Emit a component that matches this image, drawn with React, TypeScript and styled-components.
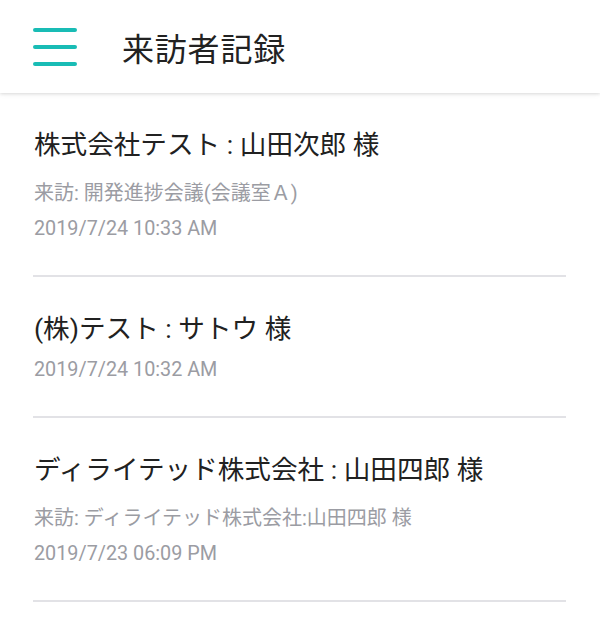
import { createGlobalStyle, styled } from "styled-components";

const GlobalStyle = createGlobalStyle`
  html, body {
    margin: 0;
    padding: 0;
    background: #fff;
  }
  body {
    font-family: Roboto, "Noto Sans CJK JP", sans-serif;
    color: #212121;
  }
`;

const Header = styled.header`
  height: 93px;
  display: flex;
  align-items: center;
  padding-left: 33px;
  background: #fff;
  box-shadow: 0 1px 3px rgba(0, 0, 0, 0.12), 0 2px 6px rgba(0, 0, 0, 0.04);
  position: relative;
  z-index: 1;
`;

const MenuButton = styled.button`
  width: 44px;
  height: 38px;
  padding: 0;
  border: none;
  background: transparent;
  display: flex;
  flex-direction: column;
  justify-content: space-between;
  margin-right: 45px;
  margin-top: 1px;

  & span {
    display: block;
    height: 4px;
    border-radius: 2px;
    background: #19bcb5;
  }
`;

const Title = styled.h1`
  margin: 0;
  font-size: 32px;
  font-weight: 400;
  color: #222;
  letter-spacing: 0.8px;
`;

const List = styled.ul`
  list-style: none;
  margin: 0;
  padding: 0 34px 0 33px;
`;

const Item = styled.li`
  padding: 30px 0 28px 1px;
  border-bottom: 2px solid #e2e2e6;
`;

const VisitorName = styled.div`
  font-size: 26.6px;
  line-height: 44px;
  color: #212121;
`;

const Purpose = styled.div`
  margin-top: 8px;
  font-size: 20px;
  line-height: 36px;
  color: #9b9ca3;
`;

const VisitedAt = styled.div<{ $tight?: boolean }>`
  margin-top: ${(p) => (p.$tight ? "1px" : "0")};
  font-size: 19.8px;
  line-height: 36px;
  color: #9b9ca3;
`;

type Visit = {
  name: string;
  purpose?: string;
  date: string;
};

const visits: Visit[] = [
  {
    name: "株式会社テスト : 山田次郎 様",
    purpose: "来訪: 開発進捗会議(会議室Ａ)",
    date: "2019/7/24 10:33 AM",
  },
  {
    name: "(株)テスト : サトウ 様",
    date: "2019/7/24 10:32 AM",
  },
  {
    name: "ディライテッド株式会社 : 山田四郎 様",
    purpose: "来訪: ディライテッド株式会社:山田四郎 様",
    date: "2019/7/23 06:09 PM",
  },
];

export default function App() {
  return (
    <>
      <GlobalStyle />
      <Header>
        <MenuButton aria-label="menu">
          <span />
          <span />
          <span />
        </MenuButton>
        <Title>来訪者記録</Title>
      </Header>
      <List>
        {visits.map((v) => (
          <Item key={v.date}>
            <VisitorName>{v.name}</VisitorName>
            {v.purpose && <Purpose>{v.purpose}</Purpose>}
            <VisitedAt $tight={!v.purpose}>{v.date}</VisitedAt>
          </Item>
        ))}
      </List>
    </>
  );
}
